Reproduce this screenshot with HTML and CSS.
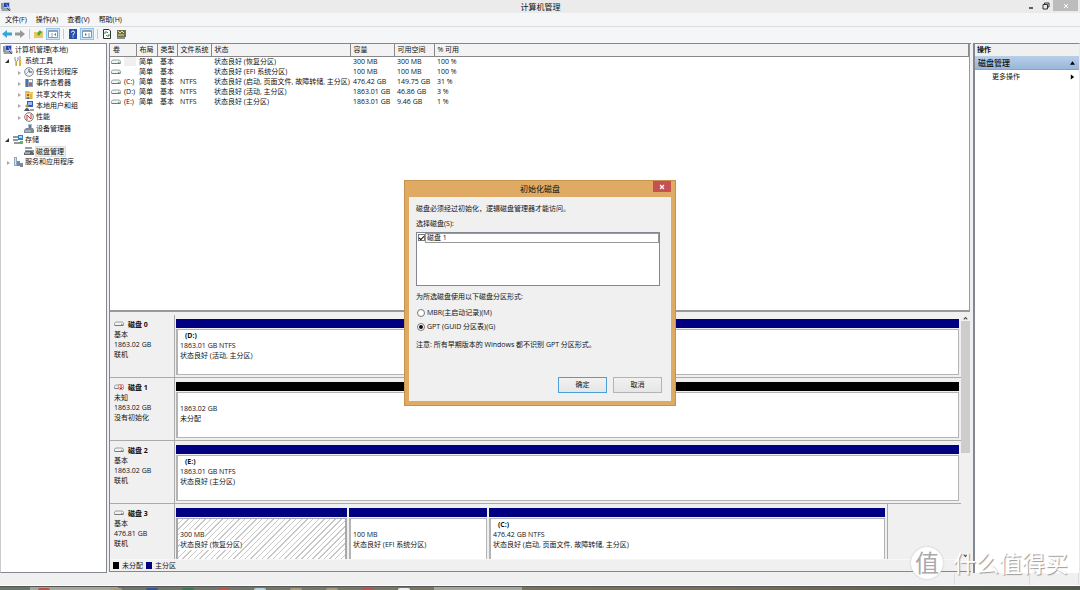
FILE: index.html
```html
<!DOCTYPE html>
<html lang="zh-CN">
<head>
<meta charset="utf-8">
<title>计算机管理</title>
<link rel="stylesheet" href="styles.css">
</head>
<body>
<svg class="defs" aria-hidden="true">
  <symbol id="pc" viewBox="0 0 10 10"><path d="M0 1h3v6H0z" fill="#8f9499"/><path d="M2 0h7v6H3z" fill="#b9c6dd"/><path d="M3 1h5v4H3z" fill="#2440b8"/><path d="M5 1l3 4H6z" fill="#7fa4ff"/><path d="M0 8l3-2h6l1 2-2 1H1z" fill="#9aa0a6"/><path d="M6 6l3 3" stroke="#444"/></symbol>
  <symbol id="tools" viewBox="0 0 10 10"><path d="M2 1v3l1 1v5M5 1v3L4 5" stroke="#8a8f96" fill="none"/><path d="M7 0v4" stroke="#888"/><path d="M6 4h2v6H6z" fill="#e8b21f"/><path d="M3 5h1v5H3z" fill="#c9a84a"/></symbol>
  <symbol id="clock" viewBox="0 0 10 10"><circle cx="5" cy="5" r="4.3" fill="#eef4fb" stroke="#7d848c"/><path d="M5 2v3h3" stroke="#445" fill="none"/><path d="M2 7l2-2" stroke="#d9a83a"/></symbol>
  <symbol id="event" viewBox="0 0 10 10"><path d="M1 1h8v8H1z" fill="#8fa0b8"/><path d="M2 1h2v8H2z" fill="#596f96"/><path d="M5 2h3v2H5z" fill="#f4f7fa"/><path d="M5 5h3v3H5z" fill="#c9584d"/></symbol>
  <symbol id="share" viewBox="0 0 10 10"><path d="M1 1h4l1 1h3v7H1z" fill="#e9bd45"/><path d="M2 3h7v6H2z" fill="#f6d873"/><circle cx="4" cy="5" r="1.3" fill="#9c6b35"/><path d="M2 9q2-4 4 0z" fill="#3c70b5"/><path d="M7 4v5" stroke="#c38b20"/></symbol>
  <symbol id="users" viewBox="0 0 10 10"><path d="M3 0h6v6H3z" fill="#3359ba"/><path d="M4 1h4v3H4z" fill="#98bdf1"/><circle cx="3" cy="5" r="1.6" fill="#c49055"/><path d="M0 10q3-6 6 0z" fill="#49545f"/><path d="M6 8h4v2H6z" fill="#9aa1a8"/></symbol>
  <symbol id="perf" viewBox="0 0 10 10"><circle cx="5" cy="5" r="4.3" fill="#fff" stroke="#777"/><path d="M3 8V3l4 4V2" stroke="#c8373a" fill="none"/></symbol>
  <symbol id="device" viewBox="0 0 10 10"><path d="M4 0h4v6H4z" fill="#a9bfd0"/><path d="M5 1h2v4H5z" fill="#58829e"/><path d="M0 6l2-2h7l1 2v3H0z" fill="#7c8b96"/><path d="M1 7h6" stroke="#d7dee2"/></symbol>
  <symbol id="storage" viewBox="0 0 10 10"><path d="M0 1h5v2H0zM0 4h5v2H0zM1 7h6v2H1z" fill="#8b989f"/><path d="M5 0h5v5H5z" fill="#3181ba"/><path d="M6 1h3v2H6z" fill="#b5def5"/><path d="M7 6h3v3H7z" fill="#6fab69"/></symbol>
  <symbol id="diskmg" viewBox="0 0 10 10"><path d="M1 1h7v2H1zM1 4h9v2H1z" fill="#969da2"/><path d="M0 7l2-2h6l2 2v2H0z" fill="#62696e"/><path d="M1 7h5" stroke="#e3e6e8"/></symbol>
  <symbol id="service" viewBox="0 0 10 10"><path d="M1 0h3v9H1z" fill="#8ca8c4"/><path d="M2 1h1v7H2z" fill="#d6e4f0"/><path d="M4 4h3v5H4zM7 6h3v4H7z" fill="#738ba4"/></symbol>
  <symbol id="drive" viewBox="0 0 10 6"><path d="M1.5 1h7l1 1.5v2h-9v-2z" fill="#f2f2f2" stroke="#85888b" stroke-width=".8"/><path d="M1 4.5h8" stroke="#777"/><path d="M7 3.4h1.5" stroke="#55a367"/></symbol>
</svg>
<div class="app">
  <header class="titlebar">
    <svg class="icon"><use href="#pc"/></svg>
    <h1>计算机管理</h1>
    <div class="winctl">
      <button aria-label="最小化"><svg viewBox="0 0 8 8"><path d="M2 6h4" stroke="#222" stroke-width="1.4"/></svg></button>
      <button aria-label="还原"><svg viewBox="0 0 8 8"><path d="M2.500 2V1H7v4H6M1 2.500h4.500V7H1z" fill="none" stroke="#333"/></svg></button>
      <button class="winclose" aria-label="关闭"><svg viewBox="0 0 8 8"><path d="M2 2l4 4M6 2L2 6" stroke="#fff"/></svg></button>
    </div>
  </header>
  <nav class="menubar"><button>文件(F)</button><button>操作(A)</button><button>查看(V)</button><button>帮助(H)</button></nav>
  <div class="toolbar">
    <button aria-label="后退"><svg viewBox="0 0 10 10"><path d="M0 5l5-4v2.500h5v3H5V9z" fill="#37a4d8"/></svg></button>
    <button aria-label="前进"><svg viewBox="0 0 10 10"><path d="M10 5L5 1v2.500H0v3h5V9z" fill="#979797"/></svg></button>
    <i class="sep"></i>
    <button aria-label="向上"><svg viewBox="0 0 10 10"><path d="M0 3h4l1-1h4v7H0z" fill="#e8c565"/><path d="M3 5l3-4 2 3H7L5 7z" fill="#48a83f"/></svg></button>
    <button class="on" aria-label="控制台树"><svg viewBox="0 0 10 10"><path d="M.5 1.500h9v7h-9z" fill="#fff" stroke="#8798aa"/><path d="M1 2.500h8" stroke="#8fa9c5"/><path d="M4 4v4" stroke="#99a"/><path d="M8 4v3L6 5.500z" fill="#397fae"/></svg></button>
    <i class="sep"></i>
    <button aria-label="帮助"><svg viewBox="0 0 10 10"><path d="M1 0h8v10H1z" fill="#2950a8"/><path d="M3.500 3.500q0-1.500 1.500-1.500t1.500 1.400T5 5.500V6.500M5 7.500v1" stroke="#fff" fill="none"/></svg></button>
    <button class="on" aria-label="操作窗格"><svg viewBox="0 0 10 10"><path d="M.5 1.500h9v7h-9z" fill="#fff" stroke="#8798aa"/><path d="M1 2.500h8" stroke="#8fa9c5"/><path d="M7 4v4" stroke="#99a"/><path d="M3 4v3l2-1.500z" fill="#397fae"/></svg></button>
    <i class="sep"></i>
    <button aria-label="刷新"><svg viewBox="0 0 10 10"><path d="M1.500.5H7l1.500 1.500v7.500h-7z" fill="#fff" stroke="#333"/><path d="M3 5V3h2l1 1M7 5v2H5L4 6" fill="none" stroke="#299044"/></svg></button>
    <button class="wide" aria-label="设置"><svg viewBox="0 0 10 10"><path d="M1 1h9v7H1z" fill="#6c7048"/><path d="M2 2l2 2 2-2 2 2M2 6h6" stroke="#eadf9b" fill="none"/><path d="M1 9h8" stroke="#222"/></svg></button>
  </div>
  <main class="main">
    <nav class="tree"><ul>
      <li><svg class="icon"><use href="#pc"/></svg>计算机管理(本地)</li>
      <li class="l1 open"><svg class="icon"><use href="#tools"/></svg>系统工具</li>
      <li class="l2 shut"><svg class="icon"><use href="#clock"/></svg>任务计划程序</li>
      <li class="l2 shut"><svg class="icon"><use href="#event"/></svg>事件查看器</li>
      <li class="l2 shut"><svg class="icon"><use href="#share"/></svg>共享文件夹</li>
      <li class="l2 shut"><svg class="icon"><use href="#users"/></svg>本地用户和组</li>
      <li class="l2 shut"><svg class="icon"><use href="#perf"/></svg>性能</li>
      <li class="l2"><svg class="icon"><use href="#device"/></svg>设备管理器</li>
      <li class="l1 open"><svg class="icon"><use href="#storage"/></svg>存储</li>
      <li class="l2"><svg class="icon"><use href="#diskmg"/></svg><span class="selected">磁盘管理</span></li>
      <li class="l1 shut"><svg class="icon"><use href="#service"/></svg>服务和应用程序</li>
    </ul></nav>
    <section class="center">
      <div class="list">
        <table class="volumes">
          <colgroup><col class="c1"><col class="c2"><col class="c3"><col class="c4"><col class="c5"><col class="c6"><col class="c7"><col></colgroup>
          <thead><tr><th>卷</th><th>布局</th><th>类型</th><th>文件系统</th><th>状态</th><th>容量</th><th>可用空间</th><th>% 可用</th></tr></thead>
          <tbody>
            <tr><td><svg class="drive"><use href="#drive"/></svg><span class="blank"></span></td><td>简单</td><td>基本</td><td></td><td>状态良好 (恢复分区)</td><td>300 MB</td><td>300 MB</td><td>100 %</td></tr>
            <tr><td><svg class="drive"><use href="#drive"/></svg></td><td>简单</td><td>基本</td><td></td><td>状态良好 (EFI 系统分区)</td><td>100 MB</td><td>100 MB</td><td>100 %</td></tr>
            <tr><td><svg class="drive"><use href="#drive"/></svg>(C:)</td><td>简单</td><td>基本</td><td>NTFS</td><td>状态良好 (启动, 页面文件, 故障转储, 主分区)</td><td>476.42 GB</td><td>149.75 GB</td><td>31 %</td></tr>
            <tr><td><svg class="drive"><use href="#drive"/></svg>(D:)</td><td>简单</td><td>基本</td><td>NTFS</td><td>状态良好 (活动, 主分区)</td><td>1863.01 GB</td><td>46.86 GB</td><td>3 %</td></tr>
            <tr><td><svg class="drive"><use href="#drive"/></svg>(E:)</td><td>简单</td><td>基本</td><td>NTFS</td><td>状态良好 (主分区)</td><td>1863.01 GB</td><td>9.46 GB</td><td>1 %</td></tr>
          </tbody>
        </table>
      </div>
      <div class="graph">
        <div class="disks">
          <div class="disk">
            <div class="info"><b><svg class="drive"><use href="#drive"/></svg>磁盘 0</b><span>基本</span><span>1863.02 GB</span><span>联机</span></div>
            <div class="vols"><div class="vol"><div class="box"><b>(D:)</b><span>1863.01 GB NTFS</span><span>状态良好 (活动, 主分区)</span></div></div></div>
          </div>
          <div class="disk">
            <div class="info"><b><svg class="drive" viewBox="0 0 10 6"><use href="#drive"/><circle cx="7" cy="3" r="2.800" fill="#fff" stroke="#b44" stroke-width=".6"/><path d="M7 1v4M5.500 3.500L7 5l1.500-1.500" stroke="#c22" fill="none"/></svg>磁盘 1</b><span>未知</span><span>1863.02 GB</span><span>没有初始化</span></div>
            <div class="vols"><div class="vol free"><div class="box"><b></b><span>1863.02 GB</span><span>未分配</span></div></div></div>
          </div>
          <div class="disk">
            <div class="info"><b><svg class="drive"><use href="#drive"/></svg>磁盘 2</b><span>基本</span><span>1863.02 GB</span><span>联机</span></div>
            <div class="vols"><div class="vol"><div class="box"><b>(E:)</b><span>1863.01 GB NTFS</span><span>状态良好 (主分区)</span></div></div></div>
          </div>
          <div class="disk">
            <div class="info"><b><svg class="drive"><use href="#drive"/></svg>磁盘 3</b><span>基本</span><span>476.81 GB</span><span>联机</span></div>
            <div class="vols split">
              <div class="vol hatched"><div class="box"><b></b><span>300 MB</span><span>状态良好 (恢复分区)</span></div></div>
              <div class="vol"><div class="box"><b></b><span>100 MB</span><span>状态良好 (EFI 系统分区)</span></div></div>
              <div class="vol"><div class="box"><b>(C:)</b><span>476.42 GB NTFS</span><span>状态良好 (启动, 页面文件, 故障转储, 主分区)</span></div></div>
            </div>
          </div>
        </div>
        <div class="scroll"><svg viewBox="0 0 9 7"><path d="M2.500 5l2-2 2 2" fill="none" stroke="#444" stroke-width="1.200"/></svg><div class="thumb"></div><svg class="down" viewBox="0 0 9 7"><path d="M2.500 2l2 2 2-2" fill="none" stroke="#444" stroke-width="1.200"/></svg></div>
      </div>
      <div class="legend"><i class="sw black"></i>未分配<i class="sw navy"></i>主分区</div>
    </section>
    <aside class="actions">
      <h2>操作</h2>
      <button class="group">磁盘管理<svg viewBox="0 0 6 6"><path d="M0 5l3-4 3 4z"/></svg></button>
      <button class="more">更多操作<svg viewBox="0 0 6 6"><path d="M1 0l4 3-4 3z"/></svg></button>
    </aside>
  </main>
  <footer class="status"><i></i><i></i><i></i></footer>
  <div class="taskbar"><i class="tab"></i><i class="red"></i><i class="none"></i><i class="tan"></i><i class="blue"></i><i class="green"></i><i class="red"></i><i class="sky"></i><i class="tan"></i><i class="tan"></i><i class="red"></i><i class="white"></i><i class="tab"></i></div>
</div>

<form class="dialog" role="dialog" aria-labelledby="dt">
  <div class="dtitle"><h2 id="dt">初始化磁盘</h2><button type="button" class="dclose" aria-label="关闭"><svg viewBox="0 0 8 8"><path d="M2 2l4 4M6 2L2 6" stroke="#fff" stroke-width="1.200"/></svg></button></div>
  <div class="dbody">
    <p>磁盘必须经过初始化，逻辑磁盘管理器才能访问。</p>
    <p class="pick">选择磁盘(S):</p>
    <div class="listbox"><input type="checkbox" id="d1" checked><label for="d1">磁盘 1</label></div>
    <p class="style">为所选磁盘使用以下磁盘分区形式:</p>
    <div class="opt"><input type="radio" name="s" id="mbr"><label for="mbr">MBR(主启动记录)(M)</label></div>
    <div class="opt"><input type="radio" name="s" id="gpt" checked><label for="gpt">GPT (GUID 分区表)(G)</label></div>
    <p class="note">注意: 所有早期版本的 Windows 都不识别 GPT 分区形式。</p>
    <div class="btns"><button type="button" class="primary">确定</button><button type="button">取消</button></div>
  </div>
</form>
<div class="mark"><span class="seal">值</span><span>什么值得买</span></div>
</body>
</html>
```

FILE: styles.css
```css
* { box-sizing: border-box; margin: 0; padding: 0; }
body { font: 7px/10px "Open Sans", "Noto Sans CJK SC", sans-serif; color: #111; background: #f0f0f0; position: relative; overflow: hidden; }
button { font: inherit; color: inherit; border: 0; background: none; }
h1, h2 { font-weight: 400; }
ul { list-style: none; }
svg { display: block; flex: none; }
.defs { position: absolute; width: 0; height: 0; }
.icon { width: 10px; height: 10px; }
.drive { width: 10px; height: 6px; }

.app { height: 100vh; display: flex; flex-direction: column; }
.titlebar { height: 13px; flex: none; display: grid; grid-template-columns: 1fr auto 1fr; align-items: center; background: #ebebeb; padding-left: 1px; }
.titlebar h1 { font-size: 8px; }
.winctl { display: flex; justify-content: flex-end; align-self: start; padding-right: 2px; }
.winctl button { width: 15px; height: 11px; display: grid; place-items: center; }
.winctl svg { width: 8px; height: 8px; }
.winctl .winclose { width: 25px; background: #bcbcbc; }
.menubar { height: 14px; flex: none; display: flex; align-items: center; gap: 9px; padding-left: 5px; background: #f5f6f7; border-bottom: 1px solid #dcdddf; }
.toolbar { height: 16px; flex: none; display: flex; align-items: center; gap: 1px; padding: 0 0 3px 1px; background: #f5f6f7; }
.toolbar button { width: 12px; height: 12px; display: grid; place-items: center; }
.toolbar svg { width: 10px; height: 10px; }
.toolbar .on { width: 14px; background: #cfe6f8; border: 1px solid #8fc3ee; }
.toolbar .wide { width: 14px; }
.sep { width: 1px; height: 10px; margin: 0 2px; background: #c8c8c8; }

.main { flex: 1; min-height: 0; display: grid; grid-template: minmax(0, 1fr) / 107px 1fr 107px; gap: 2px; }
.tree { background: #fff; border: 1px solid #828790; border-left-color: #ccc; }
.tree ul { height: 124px; display: grid; grid-auto-rows: 1fr; }
.tree li { display: flex; align-items: center; gap: 2px; padding-left: 2px; white-space: nowrap; min-height: 0; }
.tree .l1 { padding-left: 12px; position: relative; }
.tree .l2 { padding-left: 23px; position: relative; }
.tree .selected { background: #f0f0f0; outline: 1px solid #ddd; line-height: 9px; padding-right: 1px; }
.open::before, .shut::before { content: ""; position: absolute; top: 4px; border: 2px solid transparent; }
.open::before { left: 4px; border-right-color: #333; border-bottom-color: #333; }
.shut::before { left: 17px; border-left-color: #aaa; border-left-width: 3px; }
.l1.shut::before { left: 6px; }

.center { background: #f0f0f0; border: 1px solid #828790; border-right: 0; display: flex; flex-direction: column; min-width: 0; margin-bottom: 1px; }
.list { height: 268px; flex: none; background: #fff; border-bottom: 2px solid #999; border-right: 1px solid #999; margin-right: 1px; }
.volumes { width: 100%; table-layout: fixed; border-collapse: collapse; }
.volumes th { height: 12px; background: #f3f3f3; border-right: 1px solid #888; border-bottom: 1px solid #888; font-weight: 400; text-align: left; padding-left: 3px; line-height: 10px; white-space: nowrap; }
.volumes td { height: 10px; padding-left: 3px; line-height: 10px; white-space: nowrap; }
.volumes td:first-child { display: flex; align-items: center; gap: 3px; padding-left: 1px; }
.blank { width: 12px; height: 9px; background: #f0f0f0; }
.c1 { width: 26px; } .c2 { width: 21px; } .c3 { width: 20px; } .c4 { width: 34px; }
.c5 { width: 139px; } .c6 { width: 44px; } .c7 { width: 40px; }

.graph { flex: 1; min-height: 0; display: flex; overflow: hidden; padding-top: 3px; margin-right: 1px; }
.disks { flex: 1; min-width: 0; }
.disk { height: 63px; display: flex; }
.info { width: 65px; border-right: 1px solid #aaa; border-bottom: 1px solid #aaa; padding: 5px 0 0 4px; display: flex; flex-direction: column; }
.info b { display: flex; align-items: center; gap: 4px; }
.info .drive { margin-bottom: 2px; }
.vols { flex: 1; display: flex; gap: 2px; padding: 4px 2px 2px 1px; border-bottom: 1px solid #aaa; }
.vol { flex: 1; border-top: 9px solid #000080; display: flex; padding-top: 1px; min-width: 0; }
.free { border-top-color: #000; }
.box { flex: 1; background: #fff; border: 1px solid #b4b4b4; border-left-width: 2px; padding: 1px 0 0 2px; display: flex; flex-direction: column; align-items: flex-start; white-space: nowrap; min-width: 0; }
.box b { height: 10px; padding-left: 5px; }
.split { display: grid; grid-template-columns: 171fr 138fr 396fr; margin-right: 73px; border-right: 1px solid #aaa; border-bottom: 0; }
.hatched .box { background: repeating-linear-gradient(135deg, #fff 0 3px, #c8c8c8 3px 4px); border-color: #a8a8ac; border-right-width: 2px; }
.hatched span { background: #fff; }
.scroll { width: 9px; background: #f0f0f0; display: flex; flex-direction: column; }
.scroll svg { width: 9px; height: 6px; }
.scroll .down { margin-top: auto; }
.thumb { height: 132px; background: #cdcdcd; }
.legend { height: 12px; flex: none; display: flex; align-items: center; gap: 3px; padding-left: 3px; border-top: 1px solid #f7f7f7; }
.sw { width: 6px; height: 7px; background: #000; }
.navy { background: #000080; }

.actions { background: #fff; border: 1px solid #828790; border-left-width: 2px; border-bottom: 0; border-right-color: #e8e8e8; }
.actions h2 { height: 12px; background: #f0f0f0; font-size: 7px; line-height: 12px; font-weight: 700; padding-left: 2px; }
.actions button { width: 100%; display: flex; justify-content: space-between; align-items: center; padding: 0 4px 0 3px; }
.actions svg { width: 5px; height: 6px; }
.actions .group { height: 14px; font-size: 8px; font-weight: 500; background: linear-gradient(#b9cfe8, #98b7da); border-bottom: 1px solid #87a4c4; }
.actions .more { height: 13px; padding-left: 17px; }

.status { height: 13px; flex: none; background: #f0f0f0; border-bottom: 1px solid #fff; display: grid; grid-template-columns: 1fr 75px 49px; padding-right: 1px; }
.status i { border-right: 1px solid #ddd; }
.taskbar { height: 4px; flex: none; background: linear-gradient(90deg, #68766d, #777766 35%, #777059 65%, #4e594b); border-top: 1px solid #555; display: flex; gap: 24px; padding-left: 30px; }
.taskbar i { width: 12px; border-radius: 6px 6px 0 0; margin-top: 1px; }
.taskbar .tab { width: 88px; margin: 0 -104px 0 0; border-radius: 0; background: #a3a79c; }
.taskbar .tab:last-child { margin: 0; }
.taskbar .red { background: #b9524b; } .taskbar .tan { background: #a59d7e; } .taskbar .blue { background: #335596; }
.taskbar .green { background: #3d7653; } .taskbar .sky { background: #b7d4dc; } .taskbar .white { background: #eee; }

.dialog { position: absolute; left: calc(50% - 136px); top: 180px; width: 272px; background: #dfaa64; border: 1px solid #c9924d; padding: 0 4px 4px; }
.dtitle { height: 16px; display: grid; grid-template-columns: 18px 1fr 18px; }
.dtitle h2 { grid-column: 2; font-size: 8px; line-height: 16px; text-align: center; }
.dclose { height: 11px; background: #c75050; display: grid; place-items: center; }
.dclose svg { width: 8px; height: 8px; }
.dbody { background: #f0f0f0; padding: 7px 11px 8px 7px; }
.pick { margin: 5px 0 3px; }
.listbox { height: 54px; background: #fff; border: 1px solid #828790; display: flex; align-items: flex-start; }
.listbox label { flex: 1; border: 1px solid #999; line-height: 8px; padding-left: 1px; }
input { appearance: none; flex: none; background: #fff; border: 1px solid #777; width: 8px; height: 8px; position: relative; }
input[type=checkbox] { width: 7px; height: 7px; margin: 1px 0 0 1px; }
input[type=checkbox]:checked::after { content: ""; position: absolute; left: 1px; top: 0; width: 2px; height: 4px; border: solid #111; border-width: 0 1px 1px 0; transform: rotate(45deg); }
input[type=radio] { border-radius: 50%; }
input[type=radio]:checked::after { content: ""; position: absolute; inset: 1px; border-radius: 50%; background: #111; }
.style { margin: 6px 0 4px; }
.opt { display: flex; align-items: center; gap: 2px; height: 14px; padding-left: 1px; }
.note { margin-top: 6px; }
.btns { display: flex; justify-content: flex-end; gap: 6px; margin: 27px -2px 0 0; }
.btns button { width: 49px; height: 16px; border: 1px solid #b4b4b4; background: linear-gradient(#f1f1f1, #e6e6e6); }
.btns .primary { border-color: #4a9fd8; }

.mark { position: absolute; right: 12px; bottom: 10px; display: flex; align-items: center; gap: 10px; font-size: 23px; line-height: 34px; color: #fff; text-shadow: 1px 1px 1px #999; }
.seal { width: 32px; height: 32px; border-radius: 50%; background: #fff; color: #aaa; font-size: 24px; line-height: 32px; text-align: center; text-shadow: none; box-shadow: 0 0 2px #bbb; }
```
